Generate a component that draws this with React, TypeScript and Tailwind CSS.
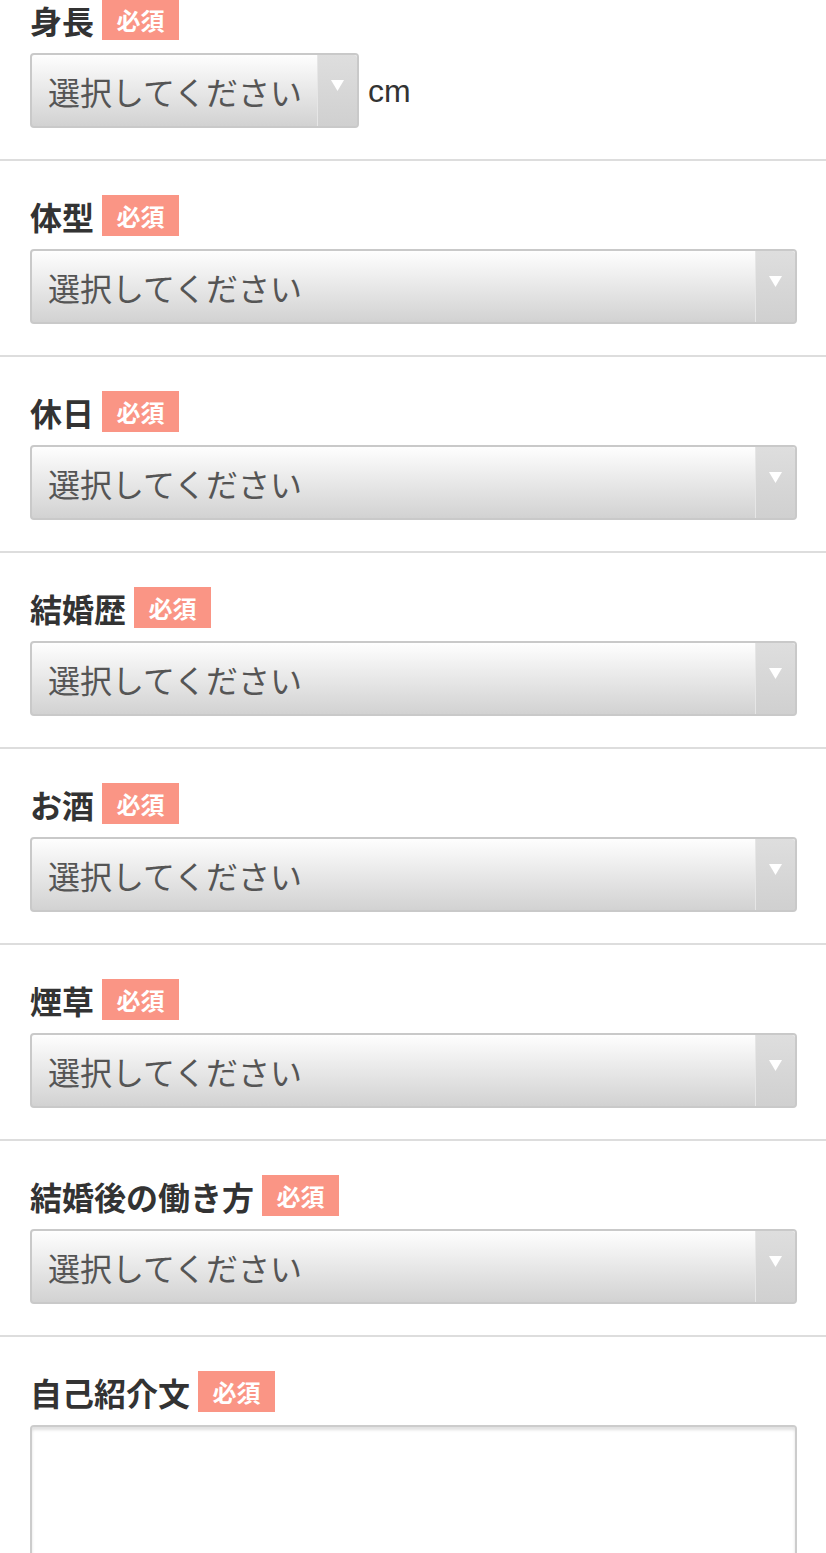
import React from "react";

const FONT = '"Noto Sans CJK JP", "Noto Sans", sans-serif';

function Badge() {
  return (
    <span className="inline-flex h-[41px] items-center bg-[#fa9585] px-[14.5px] text-[24px] font-bold leading-none text-white">
      必須
    </span>
  );
}

function Label({ text }: { text: string }) {
  return (
    <div className="flex h-[41px] items-center gap-[8px]">
      <span className="text-[32px] font-bold leading-none text-[#333]">{text}</span>
      <Badge />
    </div>
  );
}

function Select({ width }: { width?: string }) {
  return (
    <div
      className={`relative flex h-[75px] items-center rounded-[4px] border-2 border-[#c9c9c9] bg-gradient-to-b from-[#fefefe] to-[#d2d2d2] ${
        width ?? "w-full"
      }`}
    >
      <span className="pl-[16px] text-[32px] leading-none text-[#555]">選択してください</span>
      <div className="absolute right-0 top-0 bottom-0 flex w-[40px] items-center justify-center rounded-r-[3px] border-l border-[#e6e6e6] bg-gradient-to-b from-[#dedede] to-[#d0d0d0]">
        <svg width="13" height="11" viewBox="0 0 13 11" className="-mt-[10px]">
          <polygon points="0,0 13,0 6.5,11" fill="#ffffff" />
        </svg>
      </div>
    </div>
  );
}

function Section({ label, children }: { label: string; children: React.ReactNode }) {
  return (
    <div className="border-b-2 border-[#dddddd] pl-[30px] pr-[29px] pt-[34px] pb-[31px]">
      <Label text={label} />
      <div className="mt-[13px]">{children}</div>
    </div>
  );
}

export default function App() {
  const items = ["体型", "休日", "結婚歴", "お酒", "煙草", "結婚後の働き方"];
  return (
    <div className="h-[1553px] w-[826px] overflow-hidden bg-white" style={{ fontFamily: FONT }}>
      <div className="-mt-[35px]">
        <Section label="身長">
          <div className="flex items-center gap-[9px]">
            <Select width="w-[329px]" />
            <span
              className="text-[32px] leading-none text-[#333]"
              style={{ fontFamily: '"Liberation Sans", Arial, sans-serif' }}
            >
              cm
            </span>
          </div>
        </Section>
        {items.map((l) => (
          <Section key={l} label={l}>
            <Select />
          </Section>
        ))}
        <div className="pl-[30px] pr-[29px] pt-[34px]">
          <Label text="自己紹介文" />
          <div className="mt-[13px] h-[200px] w-full rounded-[4px] border-2 border-[#cccccc] bg-white shadow-[inset_0_3px_3px_rgba(0,0,0,0.12)]" />
        </div>
      </div>
    </div>
  );
}
